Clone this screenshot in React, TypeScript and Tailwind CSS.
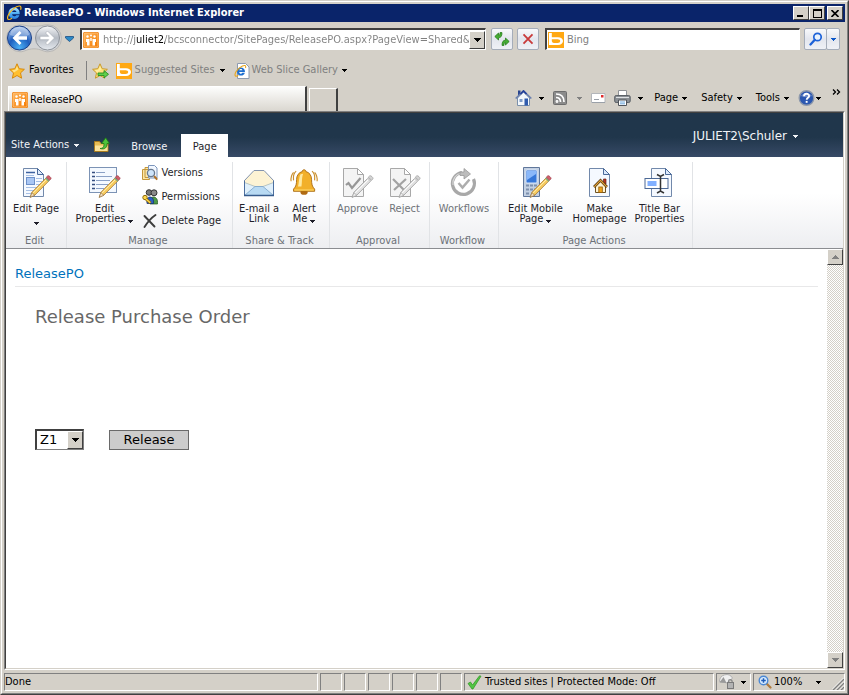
import React from "react";

const tahoma = "font-['DejaVu_Sans_Condensed','DejaVu_Sans',sans-serif] font-stretch-condensed";

function Caret({ className = "" }: { className?: string }) {
  return (
    <svg width="5" height="3" viewBox="0 0 5 3" className={"shrink-0 " + className} aria-hidden="true">
      <path d="M0 0h5v1H4v1H3v1H2V2H1V1H0z" fill="currentColor" />
    </svg>
  );
}

function BigCaret({ className = "" }: { className?: string }) {
  return (
    <svg width="7" height="4" viewBox="0 0 7 4" className={"shrink-0 " + className} aria-hidden="true">
      <path d="M0 0h7v1H6v1H5v1H4v1H3V3H2V2H1V1H0z" fill="currentColor" />
    </svg>
  );
}

function IeLogo() {
  return (
    <svg width="16" height="16" viewBox="0 0 16 16" className="shrink-0" aria-hidden="true">
      <defs>
        <linearGradient id="ieBlue" x1="0" y1="0" x2="0" y2="1">
          <stop offset="0" stopColor="#b5e6ff" />
          <stop offset="0.5" stopColor="#4fb0f4" />
          <stop offset="1" stopColor="#2b80dc" />
        </linearGradient>
      </defs>
      <path
        d="M8.200 2.600c3.200 0 5.500 2.500 5.500 5.900v.8H6.100c.1 1.300 1 2 2.200 2 .9 0 1.600-.3 1.900-1h3.200c-.7 2.300-2.600 3.700-5.100 3.700-3.400 0-5.800-2.400-5.800-5.700s2.400-5.700 5.700-5.700zM6.200 7.100h4.200c-.1-1.100-1-1.800-2.100-1.800s-2 .7-2.100 1.800z"
        fill="url(#ieBlue)"
      />
      <path d="M14.600 4.800C15.400 2.500 14.900 1 13.300 1 10 1 4.300 5.500 2.200 10.300c-1.100 2.500-.8 4.200.7 4.200.8 0 1.900-.5 3-1.300" fill="none" stroke="#f6b91d" strokeWidth="1.200" />
    </svg>
  );
}

function SiteIcon() {
  return (
    <svg width="16" height="16" viewBox="0 0 16 16" className="shrink-0" aria-hidden="true">
      <defs>
        <linearGradient id="siteOrange" x1="0" y1="0" x2="1" y2="1">
          <stop offset="0" stopColor="#ffb75e" />
          <stop offset="1" stopColor="#f47a00" />
        </linearGradient>
      </defs>
      <rect width="16" height="16" rx="1.500" fill="#ee7d0a" />
      <rect x="1" y="1" width="14" height="14" rx="1" fill="url(#siteOrange)" stroke="#ffcf93" strokeWidth="0.700" />
      <g fill="#fff">
        <circle cx="4.500" cy="4.500" r="1.200" />
        <circle cx="8" cy="3.500" r="1" />
        <circle cx="11.500" cy="4.500" r="1.200" />
        <path d="M3 7h3.500v6.500H4V10H3zM9.500 7H13v3h-1v3.500H9.500zM7.300 6h1.400v3H7.300z" />
      </g>
    </svg>
  );
}

function BingIcon() {
  return (
    <svg width="16" height="16" viewBox="0 0 16 16" className="shrink-0" aria-hidden="true">
      <rect width="16" height="16" fill="#ffa813" />
      <path d="M1 1h2.800v4.300h6.200c2.800 0 5 1.400 5 3.800S13 13 10 13H1z" fill="#fff" />
      <path d="M3.800 7.200h5.800c1.500 0 2.600.7 2.600 1.900s-1 1.900-2.600 1.900H6C4.500 11 3.800 10 3.800 8.800z" fill="#ffa813" />
    </svg>
  );
}

function NavArrows() {
  return (
    <svg width="56" height="30" viewBox="0 0 56 30" className="shrink-0" aria-hidden="true">
      <defs>
        <radialGradient id="backBall" cx="0.5" cy="0.900" r="0.900">
          <stop offset="0" stopColor="#4bb0f5" />
          <stop offset="0.500" stopColor="#1f5fbe" />
          <stop offset="1" stopColor="#a9c3ea" />
        </radialGradient>
        <linearGradient id="fwdBall" x1="0" y1="0" x2="0" y2="1">
          <stop offset="0" stopColor="#f6f7f8" />
          <stop offset="0.500" stopColor="#b4bac3" />
          <stop offset="1" stopColor="#e6eaef" />
        </linearGradient>
      </defs>
      <path d="M14 .8c5 0 7 1.500 14 1.500S37 .8 42 .8a13.500 13.500 0 0 1 0 27c-5 0-7-3-14-3s-9 3-14 3a13.500 13.500 0 0 1 0-27z" fill="#d2d3d5" stroke="#b2b1ae" strokeWidth=".8" />
      <circle cx="13.500" cy="14" r="12" fill="url(#backBall)" stroke="#1a3f86" />
      <path d="M4 11C5 5 9 3 13.500 3S22 5 23 11c-5 2-13 2-19 0z" fill="#fff" opacity=".35" />
      <path d="M13.500 7 6.500 14l7 7 2-2-3.200-3.300H21v-3.400h-8.700L15.500 9z" fill="#fff" />
      <circle cx="41.500" cy="14" r="12" fill="url(#fwdBall)" stroke="#8d9299" />
      <path d="M41.500 7 48.500 14l-7 7-2-2 3.200-3.300H34v-3.400h8.700L39.500 9z" fill="#fff" stroke="#a3a8b0" strokeWidth=".6" />
    </svg>
  );
}

const starPath = "M8 .8l2.200 4.900 5.200.6-3.900 3.600 1.100 5.300L8 12.500l-4.600 2.700 1.100-5.300L.6 6.300l5.200-.6z";

function Star({ add = false }: { add?: boolean }) {
  return (
    <svg width="17" height="16" viewBox="0 0 17 16" className="shrink-0" aria-hidden="true">
      <path d={starPath} fill={add ? "#ffe27a" : "#ffbf2e"} stroke={add ? "#c99a2c" : "#d88a0c"} />
      <path d="M8 3l1.500 3.500-4.500 3L3 7.200l3.300-.5z" fill="#fff3b0" opacity=".7" />
      {add && <path d="M6 10h6V7.500l4.500 3.800L12 15v-2.500H6z" fill="#5fcf4a" stroke="#2b8f22" strokeWidth=".9" />}
    </svg>
  );
}

function Pencil({ gray = false }: { gray?: boolean }) {
  return (
    <g>
      <path d="M10.200 30.300l1.700-5L26 11l3 2.800L15 28z" fill={gray ? "#e2e2e2" : "#f7cb5d"} stroke={gray ? "#9b9b9b" : "#a5793a"} strokeWidth=".8" />
      <path d="M13 26.200 27 12" stroke={gray ? "#fff" : "#fff0b5"} />
      <path d="M10.200 30.300l1.700-4.600 2.900 2.600z" fill={gray ? "#eee" : "#f4dfc0"} stroke={gray ? "#9b9b9b" : "#8a6a3c"} strokeWidth=".6" />
      <path d="M25 11.500l3.500 3.200 1.100-1.200-3.500-3.200z" fill={gray ? "#ccc" : "#7fa878"} />
      <path d="M26.300 10.200l1.600-1.500c.9-.4 3.600 1.900 3.100 3l-1.400 1.600z" fill={gray ? "#d5d5d5" : "#d3606b"} stroke={gray ? "#999" : "#9b3a46"} strokeWidth=".7" />
    </g>
  );
}

function Sheet({ gray = false, x = 3 }: { gray?: boolean; x?: number }) {
  return (
    <g transform={`translate(${x} 0)`}>
      <path d="M1.500 1.500h14l6 6v22h-20z" fill={gray ? "#f4f4f4" : "#f5f9ff"} stroke={gray ? "#a8a8a8" : "#7289ab"} />
      <path d="M15.500 1.500v6h6z" fill={gray ? "#fff" : "#dce9fb"} stroke={gray ? "#a8a8a8" : "#4b6a99"} />
    </g>
  );
}

type RibbonIconName = "page" | "props" | "mail" | "bell" | "approve" | "reject" | "workflow" | "mobile" | "home" | "title";

function RibbonIcon({ name }: { name: RibbonIconName }) {
  return (
    <svg width="32" height="32" viewBox="0 0 32 32" className="shrink-0" aria-hidden="true">
      {name === "page" && (
        <g>
          <Sheet x={2} />
          <path d="M6 8.500h8M16 11.500h6M16 14.500h6M16 17.500h6M6 20.500h16M6 23.500h13M6 26.500h8" stroke="#a6bfe4" />
          <path d="M6 5.500h9" stroke="#3d62a0" strokeWidth="1.500" />
          <rect x="6.500" y="10.500" width="8" height="7" fill="#a8c6f4" stroke="#6d90c9" />
          <Pencil />
        </g>
      )}
      {name === "props" && (
        <g>
          <rect x=".5" y=".5" width="27" height="25" fill="#f4f9ff" stroke="#7c93b5" />
          <path d="M7 5.500h9M7 9.500h16M7 13.500h14M7 17.500h12M7 21.500h8" stroke="#8aa0c5" />
          <path d="M3 5.500h3M3 9.500h3M3 13.500h3M3 17.500h3M3 21.500h3" stroke="#344e7f" strokeWidth="1.300" />
          <Pencil />
        </g>
      )}
      {name === "mail" && (
        <g strokeLinejoin="round">
          <path d="M1.500 13.500 11 3.500h10L30.500 13.500v15h-29z" fill="#fdf3d4" stroke="#8494ae" />
          <path d="M1.500 15.500 12 19.500h8L30.500 15.500v13h-29z" fill="#e0f0fb" stroke="#a9b9b7" strokeWidth=".8" />
          <path d="M1.500 28.500 12 19.500h8l10.500 9" fill="#b8daf3" stroke="#7aa3c9" strokeWidth=".8" />
          <path d="M1.500 13.500V28.500h29V13.500" fill="none" stroke="#4d6f9f" />
          <path d="M1 28.500h30" stroke="#365b8c" strokeWidth="1.500" />
        </g>
      )}
      {name === "bell" && (
        <g transform="translate(2 1) scale(.88)">
          <path d="M7 3.500C4 6 3.500 10 4 14M4 5C1.500 8 .8 11 1.200 15M25 3.500c3 2.500 3.500 6.500 3 10.500M28 5c2.500 3 3.200 6 2.800 10" fill="none" stroke="#c98f2d" strokeWidth="1.300" />
          <ellipse cx="16" cy="27.500" rx="4" ry="3" fill="#b06a12" />
          <path d="M16 2c1.500 0 2 1 2 2 4 1 6.500 4.500 6.500 9 0 5 .5 8 3.500 11v2.500H4V24C7 21 7.500 18 7.500 13c0-4.500 2.500-8 6.500-9 0-1 .5-2 2-2z" fill="#f2b02a" stroke="#a8690f" />
          <path d="M12 7c-2 3-1.500 10-3 14h4c1-4 0-10 2-14.500z" fill="#ffe9a0" />
          <path d="M5 25h22" stroke="#ffdf7c" />
        </g>
      )}
      {name === "approve" && (
        <g>
          <Sheet gray x={0} />
          <path d="M4 18l2.500-2 3.500 5L18.500 11" fill="none" stroke="#979797" strokeWidth="2.200" />
          <Pencil gray />
        </g>
      )}
      {name === "reject" && (
        <g>
          <Sheet gray x={0} />
          <path d="M4 12l12 12M17 12 5 23" fill="none" stroke="#a2a2a2" strokeWidth="2.200" />
          <Pencil gray />
        </g>
      )}
      {name === "workflow" && (
        <g fill="none">
          <path d="M14 5.500A11 11 0 1 0 25.500 12" stroke="#a8a8a8" strokeWidth="3.200" />
          <path d="M13 6A10.500 10.500 0 0 0 5 18" stroke="#d6d6d6" strokeWidth="1.200" />
          <path d="M12 5h4V1.500L22.500 7 16 12V8.500h-4z" fill="#bcbcbc" stroke="#999" strokeWidth=".8" />
          <path d="M10.500 16l4 4.500 7-8" stroke="#adadad" strokeWidth="2.500" />
        </g>
      )}
      {name === "mobile" && (
        <g>
          <path d="M3.500.5h16v29h-16z" fill="#c3d0e2" stroke="#60779b" />
          <rect x="6" y="3" width="11" height="13" rx="1" fill="#3577d9" stroke="#d5e4fa" />
          <path d="M7 4h9v3L7 13z" fill="#8ab8fa" />
          <path d="M6 18.500h3M10 18.500h3M14 18.500h3M6 22.500h3M10 22.500h3M14 22.500h3M6 26.500h3" stroke="#7d90ad" strokeWidth="2" />
          <Pencil />
        </g>
      )}
      {name === "home" && (
        <g>
          <Sheet x={4} />
          <path d="M19.500 12h2.500v5h-2.500z" fill="#b73420" stroke="#6b2418" strokeWidth=".7" />
          <path d="M11.500 19V25.500h10V19l-5-4.500z" fill="#fff4d3" stroke="#6d5021" />
          <path d="M10 20 16.500 13.300l6.500 6.700" fill="none" stroke="#54370f" strokeWidth="2.600" />
          <path d="M10.200 19.800 16.500 13.300l6.300 6.500" fill="none" stroke="#e6a53a" strokeWidth="1.200" />
          <rect x="14.800" y="20" width="3.500" height="5.500" fill="#f2a51c" stroke="#915b0c" strokeWidth=".8" />
        </g>
      )}
      {name === "title" && (
        <g>
          <Sheet x={6} />
          <rect x="1" y="11.500" width="23" height="10" fill="#fff" stroke="#4c6996" />
          <rect x="3.500" y="14" width="9" height="5" fill="#82b0ff" />
          <path d="M13 7.500l3.500 2 3.500-2M13 26l3.500-2 3.500 2M16.500 9.500v14.500" fill="none" stroke="#333" strokeWidth="1.500" />
        </g>
      )}
    </svg>
  );
}

function RibbonButton({ icon, lines, caret = false, caretBelow = false, disabled = false, width }: { icon: RibbonIconName; lines: string[]; caret?: boolean; caretBelow?: boolean; disabled?: boolean; width: string }) {
  return (
    <button type="button" disabled={disabled} className={"flex flex-col items-center whitespace-nowrap " + width + (disabled ? " text-[#6f7378]" : " text-[#1f1f2a]")}>
      <RibbonIcon name={icon} />
      <span className="mt-[5px] flex flex-col items-center leading-[10px]">
        {lines.map((line, i) => (
          <span key={line} className="flex items-center gap-[3px]">
            {line}
            {caret && i === lines.length - 1 && <Caret className="mt-1" />}
          </span>
        ))}
      </span>
      {caretBelow && <Caret className="mt-2" />}
    </button>
  );
}

function RibbonGroup({ label, children, width }: { label: string; children: React.ReactNode; width: string }) {
  return (
    <section aria-label={label} className={"flex shrink-0 flex-col border-r border-[#e1e3e6] " + width}>
      <div className="flex flex-1 justify-center pt-[5px]">{children}</div>
      <h2 className="pr-[3px] text-center leading-[14px] text-[#6c7178]">{label}</h2>
    </section>
  );
}

function SmallIcon({ name }: { name: "versions" | "permissions" | "delete" }) {
  return (
    <svg width="16" height="16" viewBox="0 0 16 16" className="shrink-0" aria-hidden="true">
      {name === "versions" && (
        <g>
          <path d="M.5 4.500h7v10h-7zM3 2.500h7v10H3z" fill="#fbe7a8" stroke="#c4963a" />
          <path d="M6.500.5h6l2.500 2.500v10H6.500z" fill="#f2f7ff" stroke="#7c95bb" />
          <path d="M12 11l3.200 3.600" stroke="#b0732a" strokeWidth="2" />
          <circle cx="9" cy="8" r="3.600" fill="#cfe5fb" stroke="#69798f" strokeWidth="1.300" />
        </g>
      )}
      {name === "permissions" && (
        <g>
          <path d="M8 15c-1-5 1-7 3.500-7s4.500 2 4 7z" fill="#4d9a48" stroke="#22571f" strokeWidth=".7" />
          <circle cx="7" cy="3.500" r="2.800" fill="#777" stroke="#333" />
          <circle cx="12" cy="3.800" r="3" fill="#8a8a8a" stroke="#333" />
          <path d="M5 14.500c-.5-4 .5-6.500 3-6.500s4 2.500 3.500 6.500z" fill="#2c5fc4" stroke="#122d6c" strokeWidth=".7" />
          <circle cx="3" cy="8.500" r="2.200" fill="#ffd84d" stroke="#8d6a09" />
          <path d="M4.200 10.200 8.500 14" stroke="#8d6a09" strokeWidth="3" />
          <path d="M4 10l4.300 3.800" stroke="#ffd84d" strokeWidth="1.500" />
        </g>
      )}
      {name === "delete" && (
        <path d="M2.500 3 12.500 13.500M13.500 2C9 5 6 8.500 2.500 14" fill="none" stroke="#3d3d3d" strokeWidth="1.900" strokeLinecap="round" />
      )}
    </svg>
  );
}

function CommandIcon({ name }: { name: "home" | "rss" | "mail" | "print" | "help" }) {
  return (
    <svg width="17" height="16" viewBox="0 0 17 16" className="shrink-0" aria-hidden="true">
      {name === "home" && (
        <g>
          <path d="M2.500 8v7.500h12V8L8.500 2z" fill="#f3f7fb" stroke="#7a90ab" />
          <path d="M3 .5h2.500V5H3z" fill="#29458f" />
          <path d="M.7 8.500 8.500 1l7.800 7.500" fill="none" stroke="#6a7fae" strokeWidth="1.700" />
          <path d="M5.500 4 8.500 1l3 3" fill="none" stroke="#24409b" strokeWidth="1.700" />
          <rect x="4.500" y="9" width="3" height="3" fill="#7e9cc9" />
          <rect x="9.500" y="8.500" width="3.500" height="7" fill="#2f5bad" />
        </g>
      )}
      {name === "rss" && (
        <g fill="none" stroke="#fff" strokeWidth="1.700">
          <rect x="1.500" y="1.500" width="13" height="13" rx="1" fill="#8b8b8b" stroke="#6d6d6d" strokeWidth="1" />
          <path d="M4 4c5 0 8 3 8 8M4 7.500c3 0 4.500 1.500 4.500 4.500" />
          <circle cx="5" cy="11.500" r=".6" />
        </g>
      )}
      {name === "mail" && (
        <g>
          <path d="M1.500 3.500h13.500v9h-13.500z" fill="#fff" stroke="#b3b6ba" />
          <path d="M2 12.500h13M4 9.500h5" stroke="#9aa0a8" />
          <rect x="11" y="5" width="2.500" height="2.500" fill="#e02b2b" />
        </g>
      )}
      {name === "print" && (
        <g>
          <path d="M4.500.5h8v6h-8z" fill="#fff" stroke="#8f9296" />
          <rect x=".7" y="5.500" width="15.500" height="7" rx="1.500" fill="#8a8f94" stroke="#5b6066" />
          <path d="M2 7.500h13" stroke="#dde0e3" />
          <path d="M4.500 10h8v5.500h-8z" fill="#fff" stroke="#50555b" />
          <path d="M6 12h5M6 13.800h5" stroke="#6fa9dd" />
        </g>
      )}
      {name === "help" && (
        <g>
          <circle cx="8.500" cy="8" r="7.300" fill="#2b57b0" stroke="#8d98ab" strokeWidth="1.400" />
          <path d="M3 6c1-3.500 10-3.500 11 0-3 1.500-8 1.500-11 0z" fill="#fff" opacity=".3" />
          <path d="M6 6.300c0-3.500 5.300-3.300 5.100-.2-.1 1.600-2.400 1.800-2.400 3.600" fill="none" stroke="#fff" strokeWidth="1.800" />
          <rect x="7.700" y="10.900" width="1.900" height="1.900" fill="#fff" />
        </g>
      )}
    </svg>
  );
}

const raised = "border border-t-white border-l-white border-r-[#404040] border-b-[#404040] bg-[#d4d0c8]";
const sunken = "border border-t-[#808080] border-l-[#808080] border-r-white border-b-white";
const glass = "flex h-[22px] items-center justify-center rounded-[2px] border border-[#a5adba] bg-linear-to-b from-[#f8f9fb] via-[#e3e6ee] to-[#eff1f6]";

function StatusPanel({ className = "", children }: { className?: string; children?: React.ReactNode }) {
  return <div className={"flex h-[18px] items-center " + sunken + " " + className}>{children}</div>;
}

function BrowserChrome() {
  return (
    <header className="shrink-0">
      <div className="flex h-[18px] items-center bg-[#0a246a] pr-[2px] pl-[2px] text-white">
        <IeLogo />
        <h1 className="ml-[2px] flex-1 text-[11px] leading-[18px] font-bold">ReleasePO - Windows Internet Explorer</h1>
        <div className="flex">
          <button type="button" aria-label="Minimize" className={"flex h-[14px] w-4 items-end pb-[2px] pl-[3px] " + raised}>
            <span className="h-[2px] w-[6px] bg-black" />
          </button>
          <button type="button" aria-label="Maximize" className={"flex h-[14px] w-4 items-center justify-center " + raised}>
            <span className="h-[9px] w-[9px] border border-t-2 border-black" />
          </button>
          <button type="button" aria-label="Close" className={"ml-[2px] flex h-[14px] w-4 items-center justify-center " + raised}>
            <svg width="8" height="7" viewBox="0 0 8 7" aria-hidden="true">
              <path d="M.5 0l7 7M7.500 0l-7 7" stroke="#000" strokeWidth="1.600" />
            </svg>
          </button>
        </div>
      </div>

      <div className="flex h-[34px] items-center pr-[5px] pl-[2px]">
        <button type="button" aria-label="Back and forward">
          <NavArrows />
        </button>
        <button type="button" aria-label="Recent pages" className="ml-[3px]">
          <svg width="9" height="6" viewBox="0 0 9 6" aria-hidden="true">
            <path d="M.5.5h8v1.500l-4 3.500-4-3.500z" fill="#2c8ac7" stroke="#1a4e84" strokeWidth=".8" />
          </svg>
        </button>
        <div className="ml-[6px] flex h-[22px] w-[406px] items-center border border-t-2 border-l-2 border-t-[#404040] border-r-white border-b-white border-l-[#404040] bg-white pl-px">
          <SiteIcon />
          <input
            aria-label="Address"
            className="ml-1 min-w-0 flex-1 bg-[linear-gradient(90deg,#808080_32px,#000_32px,#000_62px,#808080_62px)] bg-clip-text text-[11px] leading-4 text-transparent"
            defaultValue="http://juliet2/bcsconnector/SitePages/ReleasePO.aspx?PageView=Shared&"
          />
          <button type="button" aria-label="Show addresses" className={"flex h-[18px] w-4 items-center justify-center " + raised}>
            <BigCaret />
          </button>
        </div>
        <button type="button" aria-label="Refresh" className={"ml-[5px] w-[22px] " + glass}>
          <svg width="16" height="14" viewBox="0 0 16 14" aria-hidden="true">
            <g fill="#46ad34" stroke="#1c7513" strokeWidth=".7" strokeLinejoin="round">
              <path d="M.8 4.500 4.500 1v2.200C5.800 3.200 6 2.200 6 .6h2C8 4 7 5.800 4.500 5.800V8z" />
              <path d="M15.200 9.500 11.500 13v-2.200c-1.300 0-1.500 1-1.500 2.600H8c0-3.400 1-5.200 3.500-5.200V6z" />
            </g>
          </svg>
        </button>
        <button type="button" aria-label="Stop" className={"ml-[4px] w-[22px] " + glass}>
          <svg width="12" height="12" viewBox="0 0 12 12" aria-hidden="true">
            <path d="M1.500 1.300 10.500 10.700M10.500 1.300 1.500 10.700" stroke="#c93a3a" strokeWidth="1.800" />
          </svg>
        </button>
        <div className="ml-[6px] flex h-[22px] min-w-0 flex-1 items-center border border-t-2 border-l-2 border-t-[#404040] border-r-white border-b-white border-l-[#404040] bg-white pl-px">
          <BingIcon />
          <input aria-label="Search" placeholder="Bing" className="ml-[3px] min-w-0 flex-1 text-[11px] leading-4 placeholder:text-[#808080]" />
        </div>
        <div className="ml-1 flex">
          <button type="button" aria-label="Search" className={"w-[23px] " + glass}>
            <svg width="14" height="14" viewBox="0 0 14 14" aria-hidden="true">
              <circle cx="8.500" cy="5" r="3.700" fill="#e8f2fd" stroke="#1d62d8" strokeWidth="1.700" />
              <path d="M5.800 7.800 1.500 12.500" stroke="#1d62d8" strokeWidth="2.300" strokeLinecap="round" />
            </svg>
          </button>
          <button type="button" aria-label="Search options" className={"-ml-px w-[14px] text-[#0b57c9] " + glass}>
            <Caret />
          </button>
        </div>
      </div>

      <nav aria-label="Favorites" className="flex h-[29px] items-center pl-[5px] text-[11px] text-[#808080]">
        <button type="button" className="flex items-center gap-[3px] text-black">
          <Star />
          Favorites
        </button>
        <span className="ml-3 h-[19px] border-l border-[#808080]" />
        <button type="button" aria-label="Add to Favorites" className="ml-[5px]">
          <Star add />
        </button>
        <a href="#suggested" className="ml-[7px] flex items-center">
          <BingIcon />
          <span className="mr-[5px] ml-[3px]">Suggested Sites</span>
          <Caret className="text-black" />
        </a>
        <a href="#gallery" className="ml-[9px] flex items-center">
          <svg width="16" height="16" viewBox="0 0 16 16" className="shrink-0" aria-hidden="true">
            <path d="M3.500.5h8l3.500 3.500v11.500H3.500z" fill="#fff" stroke="#8e9bb0" />
            <path d="M6.700 4.500c2.500 0 4.300 1.800 4.300 4.400H5.200c.2 2.100 2.500 2.200 3.100.8h2.500c-.5 4-7.700 3.800-7.700-.8 0-2.600 1.400-4.400 3.600-4.400zM5.200 7.300h3.200c-.3-1.600-2.800-1.600-3.200 0z" fill="#1e6fd0" />
            <path d="M11.500 5C13-.5 5 4 1.800 9c-2 4.500.2 5 2.500 3.200" fill="none" stroke="#e9a71c" strokeWidth="1.100" />
          </svg>
          <span className="mr-[4px] ml-[2px]">Web Slice Gallery</span>
          <Caret className="text-black" />
        </a>
      </nav>

      <div className="flex h-[26px] items-end pr-1 text-[11px] text-black">
        <button type="button" className="ml-1 flex h-[25px] w-[299px] items-center gap-[2px] border-t border-r-2 border-l border-t-white border-r-[#404040] border-l-white bg-linear-to-b from-[#fdfdfc] to-[#dad7d0] pt-[2px] pl-[3px]">
          <SiteIcon />
          ReleasePO
        </button>
        <button type="button" aria-label="New tab" className="ml-[2px] h-[23px] w-[29px] border-t border-r-2 border-l border-t-white border-r-[#404040] border-l-white" />
        <nav aria-label="Commands" className="ml-auto flex h-[26px] items-center">
          <button type="button" className="flex items-center gap-[7px]" aria-label="Home"><CommandIcon name="home" /><Caret /></button>
          <button type="button" className="ml-[8px] flex items-center gap-[8px] text-[#808080]" aria-label="Feeds"><CommandIcon name="rss" /><Caret /></button>
          <button type="button" className="ml-[8px]" aria-label="Read mail"><CommandIcon name="mail" /></button>
          <button type="button" className="ml-[7px] flex items-center gap-[7px]" aria-label="Print"><CommandIcon name="print" /><Caret /></button>
          <button type="button" className="ml-[11px] flex items-center gap-1">Page<Caret /></button>
          <button type="button" className="ml-[14px] flex items-center gap-1">Safety<Caret /></button>
          <button type="button" className="ml-[14px] flex items-center gap-1">Tools<Caret /></button>
          <button type="button" className="ml-[9px] flex items-center gap-px" aria-label="Help"><CommandIcon name="help" /><Caret /></button>
          <button type="button" className="mb-3 ml-[11px]" aria-label="More commands">
            <svg width="9" height="6" viewBox="0 0 9 6" aria-hidden="true">
              <path d="M1 .5 3.500 3 1 5.500M5 .5 7.500 3 5 5.500" fill="none" stroke="#000" strokeWidth="1.300" />
            </svg>
          </button>
        </nav>
      </div>
    </header>
  );
}

function SiteHeader() {
  return (
    <div className="flex h-[44px] shrink-0 items-end bg-linear-to-b from-[#20364b] from-55% to-[#374a66] text-[11px] text-[#f2f4f7]">
      <button type="button" className="ml-[5px] flex h-6 items-center gap-[5px]">
        Site Actions
        <Caret />
      </button>
      <button type="button" aria-label="Navigate up" className="mb-1 ml-[15px]">
        <svg width="16" height="16" viewBox="0 0 16 16" aria-hidden="true">
          <path d="M.5 4.500h5l1.500 2h7v8H.5z" fill="#e8bd55" stroke="#a87b1e" />
          <path d="M1 8.500h12.500v5.500H1z" fill="#fbe39b" />
          <path d="M6 11.500c4 0 4-3 4-5H7.500L11.700.8 15.500 6.500H13c0 4-2 6.500-7 5z" fill="#4fc33b" stroke="#1e7a17" strokeWidth=".8" />
        </svg>
      </button>
      <nav aria-label="Ribbon tabs" className="ml-[9px] flex items-end">
        <a href="#browse" className="flex h-[23px] items-center pt-[3px] pr-[14px] pl-3">Browse</a>
        <a href="#page" className="flex h-[23px] w-[47px] items-center justify-center bg-white pt-[3px] text-[#1f1f2a]">Page</a>
      </nav>
      <button type="button" className="mr-[45px] mb-[13px] ml-auto flex items-center gap-[6px] font-['DejaVu_Sans',sans-serif] text-[12px] font-stretch-normal leading-4">
        JULIET2\Schuler
        <Caret />
      </button>
    </div>
  );
}

function Ribbon() {
  return (
    <div className="flex h-[92px] shrink-0 border-b border-[#8b8d91] bg-linear-to-b from-white from-40% to-[#edeef1] pt-[5px] text-[11px]">
      <RibbonGroup label="Edit" width="w-[61px]">
        <RibbonButton icon="page" lines={["Edit Page"]} caretBelow width="w-[56px]" />
      </RibbonGroup>
      <RibbonGroup label="Manage" width="w-[166px]">
        <RibbonButton icon="props" lines={["Edit", "Properties"]} caret width="w-[74px]" />
        <div className="flex w-[90px] flex-col whitespace-nowrap text-[#1f1f2a]">
          <button type="button" className="-mt-[6px] flex h-6 items-center gap-1"><SmallIcon name="versions" />Versions</button>
          <button type="button" className="flex h-6 items-center gap-1"><SmallIcon name="permissions" />Permissions</button>
          <button type="button" className="flex h-6 items-center gap-1"><SmallIcon name="delete" />Delete Page</button>
        </div>
      </RibbonGroup>
      <RibbonGroup label="Share & Track" width="w-[97px]">
        <RibbonButton icon="mail" lines={["E-mail a", "Link"]} width="w-[46px]" />
        <RibbonButton icon="bell" lines={["Alert", "Me"]} caret width="w-[44px]" />
      </RibbonGroup>
      <RibbonGroup label="Approval" width="w-[100px]">
        <RibbonButton icon="approve" lines={["Approve"]} disabled width="w-[50px]" />
        <RibbonButton icon="reject" lines={["Reject"]} disabled width="w-[44px]" />
      </RibbonGroup>
      <RibbonGroup label="Workflow" width="w-[69px]">
        <RibbonButton icon="workflow" lines={["Workflows"]} disabled width="w-[60px]" />
      </RibbonGroup>
      <RibbonGroup label="Page Actions" width="w-[194px]">
        <RibbonButton icon="mobile" lines={["Edit Mobile", "Page"]} caret width="w-[66px]" />
        <RibbonButton icon="home" lines={["Make", "Homepage"]} width="w-[62px]" />
        <RibbonButton icon="title" lines={["Title Bar", "Properties"]} width="w-[58px]" />
      </RibbonGroup>
    </div>
  );
}

function PageBody() {
  return (
    <div className="flex min-h-0 flex-1 bg-white font-['DejaVu_Sans',sans-serif] font-stretch-normal">
      <main className="min-w-0 flex-1 pr-[9px] pl-[9px]">
        <div className="border-b border-[#e8e8e9] pt-4 pb-1 text-[13px] leading-[17px]">
          <a href="#release-po" className="text-[#0072bc]">ReleasePO</a>
        </div>
        <div className="px-5 pt-[18px]">
          <h2 className="text-[18px] leading-6 text-[#676767]">Release Purchase Order</h2>
          <form className="mt-[100px] flex items-center gap-[25px] text-[13px] text-black" onSubmit={(e) => e.preventDefault()}>
            <div className="relative h-[21px] w-[49px]">
              <select aria-label="Release code" className="h-full w-full appearance-none border border-t-2 border-l-2 border-t-[#404040] border-r-[#808080] border-b-[#808080] border-l-[#404040] bg-white pl-[3px] leading-4">
                <option>Z1</option>
              </select>
              <span className={"pointer-events-none absolute top-[2px] right-px bottom-px flex w-4 items-center justify-center " + raised}>
                <BigCaret />
              </span>
            </div>
            <button type="submit" className="h-5 w-20 border border-[#6a6a6a] bg-[#cccccc] leading-4">Release</button>
          </form>
        </div>
      </main>
      <div className="flex w-4 flex-col justify-between bg-[repeating-conic-gradient(#ffffff_0_25%,#d4d0c8_0_50%)] bg-[length:2px_2px] text-[#808080]">
        <button type="button" aria-label="Scroll up" className={"flex h-4 items-center justify-center " + raised}>
          <BigCaret className="rotate-180" />
        </button>
        <button type="button" aria-label="Scroll down" className={"flex h-4 items-center justify-center " + raised}>
          <BigCaret />
        </button>
      </div>
    </div>
  );
}

function StatusBar() {
  return (
    <footer className="mt-[3px] flex h-[18px] shrink-0 gap-[2px] text-[11px] whitespace-nowrap text-black">
      <StatusPanel className="flex-1">Done</StatusPanel>
      {[0, 1, 2, 3, 4, 5].map((n) => (
        <StatusPanel key={n} className="w-[22px]" />
      ))}
      <StatusPanel className="w-[250px] gap-[3px] pl-[2px]">
        <svg width="15" height="15" viewBox="0 0 15 15" className="shrink-0" aria-hidden="true">
          <path d="M1 8.500l2.500-1.500 2 3L12.500.8l1.500.4L6 14H5z" fill="#52c544" stroke="#2c9421" strokeWidth=".7" />
        </svg>
        Trusted sites | Protected Mode: Off
      </StatusPanel>
      <StatusPanel className="w-[35px] gap-[6px] pl-[2px]">
        <svg width="16" height="16" viewBox="0 0 16 16" className="shrink-0" aria-hidden="true">
          <path d="M.5 7.500A7 7 0 0 1 13.500 4l-5 5z" fill="#f0f0f0" stroke="#b0b0b0" />
          <path d="M.5 8.500 4.500 3l3 6z" fill="#999" />
          <path d="M9.500 9V7.500a1.800 1.800 0 0 1 3.600 0V9" fill="none" stroke="#888" strokeWidth="1.300" />
          <rect x="8.500" y="8.500" width="6" height="6" fill="#b3b3b3" stroke="#7a7a7a" />
        </svg>
        <Caret />
      </StatusPanel>
      <StatusPanel className="w-[92px] pl-1">
        <svg width="14" height="14" viewBox="0 0 14 14" className="shrink-0" aria-hidden="true">
          <path d="M8 8l4.500 4.500" stroke="#b07b3d" strokeWidth="2.200" strokeLinecap="round" />
          <circle cx="5.500" cy="5.500" r="4.300" fill="#d9ecff" stroke="#4b88d4" strokeWidth="1.400" />
          <path d="M3.200 5.500h4.600M5.500 3.200v4.600" stroke="#1f5db8" strokeWidth="1.500" />
        </svg>
        <span className="ml-[2px]">100%</span>
        <Caret className="ml-[14px]" />
        <svg width="12" height="12" viewBox="0 0 12 12" className="mt-auto ml-auto shrink-0" aria-hidden="true">
          <path d="M1 12 12 1M5 12l7-7M9 12l3-3" stroke="#808080" strokeWidth="1.500" />
          <path d="M0 11.500 11.500 0M4 11.500 12 3.500M8 11.500l4-4" stroke="#fff" strokeWidth=".8" />
        </svg>
      </StatusPanel>
    </footer>
  );
}

export default function App() {
  return (
    <div className={"flex h-screen min-h-96 flex-col border border-t-[#d4d0c8] border-r-[#404040] border-b-[#404040] border-l-[#d4d0c8] bg-[#d4d0c8] " + tahoma}>
      <div className="flex min-h-0 flex-1 flex-col border border-t-white border-r-[#808080] border-b-[#808080] border-l-white p-[2px]">
        <BrowserChrome />
        <div className="flex min-h-0 flex-1 flex-col border border-t-[#808080] border-r-white border-b-white border-l-[#808080]">
          <div className="flex min-h-0 flex-1 flex-col border border-t-[#404040] border-r-[#d4d0c8] border-b-[#d4d0c8] border-l-[#404040]">
            <SiteHeader />
            <Ribbon />
            <PageBody />
          </div>
        </div>
        <StatusBar />
      </div>
    </div>
  );
}
